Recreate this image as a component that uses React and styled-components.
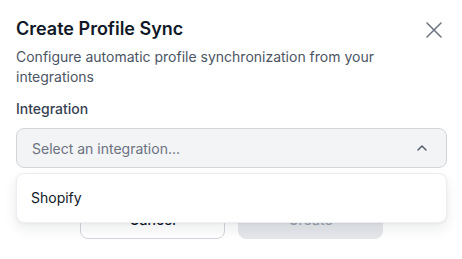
import React, { useState } from 'react';
import styled, { createGlobalStyle } from 'styled-components';

const GlobalStyle = createGlobalStyle`
    * { box-sizing: border-box; }
    body {
        margin: 0;
        background: #ffffff;
        font-family: Inter, "Noto Sans", sans-serif;
        color: #111827;
    }
`;

const Dialog = styled.div`
    width: 462px;
    height: 259px;
    padding: 15px 15px 16px 16px;
    display: flex;
    flex-direction: column;
`;

const Header = styled.div`
    display: flex;
    justify-content: space-between;
    align-items: flex-start;
`;

const Title = styled.h2`
    margin: 0;
    font-size: 18px;
    line-height: 28px;
    font-weight: 600;
    color: #111827;
`;

const CloseButton = styled.button`
    border: none;
    background: transparent;
    padding: 0;
    margin: 7px 5px 0 0;
    width: 16px;
    height: 16px;
    display: flex;
    color: #6b7280;
    cursor: pointer;
`;

const Description = styled.p`
    margin: 4px 0 0;
    width: 430px;
    font-size: 14px;
    line-height: 20px;
    color: #4b5563;
`;

const Field = styled.div`
    margin-top: 12px;
    display: flex;
    flex-direction: column;
    gap: 9px;
    position: relative;
`;

const Label = styled.label`
    font-size: 14px;
    line-height: 20px;
    font-weight: 500;
    color: #374151;
`;

const SelectTrigger = styled.button`
    width: 100%;
    height: 40px;
    padding: 0 16px 0 15px;
    display: flex;
    align-items: center;
    justify-content: space-between;
    background: #f3f4f6;
    border: 1px solid #d1d5db;
    border-radius: 8px;
    font-family: inherit;
    font-size: 14px;
    color: #6b7280;
    cursor: pointer;
`;

const Menu = styled.div`
    position: absolute;
    left: 0;
    right: 0;
    top: calc(100% + 5px);
    padding: 4px 0;
    background: #ffffff;
    border: 1px solid #eceef1;
    border-radius: 8px;
    box-shadow: 0 6px 14px rgba(17, 24, 39, 0.08), 0 1px 3px rgba(17, 24, 39, 0.05);
    z-index: 2;
`;

const MenuItem = styled.div`
    padding: 10px 14px;
    font-size: 14px;
    line-height: 20px;
    color: #111827;
    cursor: pointer;
`;

const Footer = styled.div`
    margin-top: 32px;
    display: flex;
    justify-content: center;
    gap: 13px;
`;

const Button = styled.button`
    width: 145px;
    height: 39px;
    border-radius: 8px;
    font-family: inherit;
    font-size: 14px;
    font-weight: 500;
    border: 1px solid ${p => (p.$primary ? '#e5e7eb' : '#d1d5db')};
    background: ${p => (p.$primary ? '#e5e7eb' : '#ffffff')};
    color: ${p => (p.$primary ? '#9ca3af' : '#111827')};
`;

const ChevronUp = () => (
    <svg width="16" height="16" viewBox="0 0 24 24" fill="none" stroke="#4b5563" strokeWidth="2" strokeLinecap="round" strokeLinejoin="round">
        <path d="m18 15-6-6-6 6" />
    </svg>
);

const CloseIcon = () => (
    <svg width="16" height="16" viewBox="0 0 16 16" fill="none" stroke="currentColor" strokeWidth="1.5" strokeLinecap="round">
        <path d="M1 1 15 15M15 1 1 15" />
    </svg>
);

const App = () => {
    const [open] = useState(true);

    return (
        <>
            <GlobalStyle />
            <Dialog>
                <Header>
                    <Title>Create Profile Sync</Title>
                    <CloseButton aria-label="Close"><CloseIcon /></CloseButton>
                </Header>
                <Description>
                    Configure automatic profile synchronization from your integrations
                </Description>
                <Field>
                    <Label>Integration</Label>
                    <SelectTrigger>
                        <span>Select an integration...</span>
                        <ChevronUp />
                    </SelectTrigger>
                    {open && (
                        <Menu>
                            <MenuItem>Shopify</MenuItem>
                        </Menu>
                    )}
                </Field>
                <Footer>
                    <Button>Cancel</Button>
                    <Button $primary disabled>Create</Button>
                </Footer>
            </Dialog>
        </>
    );
};

export default App;
